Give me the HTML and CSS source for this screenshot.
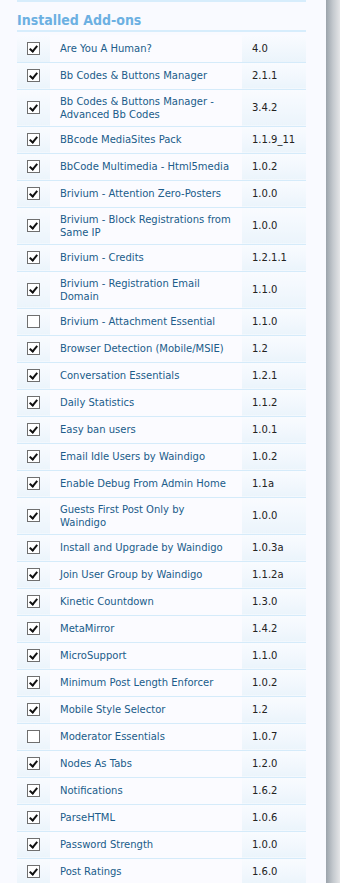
FILE: index.html
```html
<!DOCTYPE html>
<html lang="en">
<head>
  <meta charset="UTF-8">
  <title>Installed Add-ons</title>
  <link rel="stylesheet" href="styles.css">
</head>
<body>
  <div class="page">
    <div class="content">
      <div class="top-rule"></div>
      <h2 class="section-title">Installed Add-ons</h2>
      <table class="addons">
        <tr><td class="check"><span class="box on"></span></td><td class="name">Are You A Human?</td><td class="ver">4.0</td></tr>
        <tr><td class="check"><span class="box on"></span></td><td class="name">Bb Codes &amp; Buttons Manager</td><td class="ver">2.1.1</td></tr>
        <tr><td class="check"><span class="box on"></span></td><td class="name">Bb Codes &amp; Buttons Manager - Advanced Bb Codes</td><td class="ver">3.4.2</td></tr>
        <tr><td class="check"><span class="box on"></span></td><td class="name">BBcode MediaSites Pack</td><td class="ver">1.1.9_11</td></tr>
        <tr><td class="check"><span class="box on"></span></td><td class="name">BbCode Multimedia - Html5media</td><td class="ver">1.0.2</td></tr>
        <tr><td class="check"><span class="box on"></span></td><td class="name">Brivium - Attention Zero-Posters</td><td class="ver">1.0.0</td></tr>
        <tr><td class="check"><span class="box on"></span></td><td class="name">Brivium - Block Registrations from Same IP</td><td class="ver">1.0.0</td></tr>
        <tr><td class="check"><span class="box on"></span></td><td class="name">Brivium - Credits</td><td class="ver">1.2.1.1</td></tr>
        <tr><td class="check"><span class="box on"></span></td><td class="name">Brivium - Registration Email Domain</td><td class="ver">1.1.0</td></tr>
        <tr><td class="check"><span class="box"></span></td><td class="name">Brivium - Attachment Essential</td><td class="ver">1.1.0</td></tr>
        <tr><td class="check"><span class="box on"></span></td><td class="name">Browser Detection (Mobile/MSIE)</td><td class="ver">1.2</td></tr>
        <tr><td class="check"><span class="box on"></span></td><td class="name">Conversation Essentials</td><td class="ver">1.2.1</td></tr>
        <tr><td class="check"><span class="box on"></span></td><td class="name">Daily Statistics</td><td class="ver">1.1.2</td></tr>
        <tr><td class="check"><span class="box on"></span></td><td class="name">Easy ban users</td><td class="ver">1.0.1</td></tr>
        <tr><td class="check"><span class="box on"></span></td><td class="name">Email Idle Users by Waindigo</td><td class="ver">1.0.2</td></tr>
        <tr><td class="check"><span class="box on"></span></td><td class="name">Enable Debug From Admin Home</td><td class="ver">1.1a</td></tr>
        <tr><td class="check"><span class="box on"></span></td><td class="name">Guests First Post Only by Waindigo</td><td class="ver">1.0.0</td></tr>
        <tr><td class="check"><span class="box on"></span></td><td class="name">Install and Upgrade by Waindigo</td><td class="ver">1.0.3a</td></tr>
        <tr><td class="check"><span class="box on"></span></td><td class="name">Join User Group by Waindigo</td><td class="ver">1.1.2a</td></tr>
        <tr><td class="check"><span class="box on"></span></td><td class="name">Kinetic Countdown</td><td class="ver">1.3.0</td></tr>
        <tr><td class="check"><span class="box on"></span></td><td class="name">MetaMirror</td><td class="ver">1.4.2</td></tr>
        <tr><td class="check"><span class="box on"></span></td><td class="name">MicroSupport</td><td class="ver">1.1.0</td></tr>
        <tr><td class="check"><span class="box on"></span></td><td class="name">Minimum Post Length Enforcer</td><td class="ver">1.0.2</td></tr>
        <tr><td class="check"><span class="box on"></span></td><td class="name">Mobile Style Selector</td><td class="ver">1.2</td></tr>
        <tr><td class="check"><span class="box"></span></td><td class="name">Moderator Essentials</td><td class="ver">1.0.7</td></tr>
        <tr><td class="check"><span class="box on"></span></td><td class="name">Nodes As Tabs</td><td class="ver">1.2.0</td></tr>
        <tr><td class="check"><span class="box on"></span></td><td class="name">Notifications</td><td class="ver">1.6.2</td></tr>
        <tr><td class="check"><span class="box on"></span></td><td class="name">ParseHTML</td><td class="ver">1.0.6</td></tr>
        <tr><td class="check"><span class="box on"></span></td><td class="name">Password Strength</td><td class="ver">1.0.0</td></tr>
        <tr><td class="check"><span class="box on"></span></td><td class="name">Post Ratings</td><td class="ver">1.6.0</td></tr>
      </table>
    </div>
    <div class="edge"></div>
  </div>
</body>
</html>
```

FILE: styles.css
```css
body {
  margin: 0;
  padding: 0;
  background-color: #f9faff;
  font-family: "DejaVu Sans", Verdana, sans-serif;
  overflow: hidden;
}

.page {
  display: flex;
  min-height: 883px;
}

.content {
  width: 289px;
  padding-left: 17px;
  padding-right: 20px;
}

.edge {
  flex: 1;
  background: linear-gradient(to right, #9ba3ab, #c4c9ce 50%, #e4e5e7);
}

.top-rule {
  height: 2px;
  background-color: #d7edfc;
}

.section-title {
  margin: 9px 0 3px 0;
  padding-bottom: 1px;
  font-family: "DejaVu Sans Condensed", "DejaVu Sans", sans-serif;
  font-size: 14px;
  line-height: 18px;
  font-weight: bold;
  color: #6cb0e2;
  border-bottom: 2px solid #d7edfc;
}

.addons {
  width: 289px;
  border-collapse: collapse;
  font-size: 10px;
  line-height: 13px;
}

.addons td {
  height: 27px;
  padding: 5px 10px;
  border-bottom: 1px solid #d5ebfa;
  vertical-align: middle;
  box-sizing: border-box;
}

.addons .check {
  width: 33px;
  padding: 0;
  text-align: center;
  background: linear-gradient(to bottom, #f9fbff, #ebf4fb);
}

.addons .name {
  color: #205c8a;
  background-color: #fbfbff;
}

.addons .ver {
  width: 64px;
  color: #222;
  background: linear-gradient(to bottom, #f9fbff, #ebf4fb);
}

.box {
  display: inline-block;
  width: 11px;
  height: 11px;
  border: 1px solid #6f6f6f;
  background-color: #fff;
  vertical-align: middle;
  position: relative;
}

.box.on::after {
  content: "";
  position: absolute;
  left: 3px;
  top: 1px;
  width: 3px;
  height: 6px;
  border-right: 2px solid #111;
  border-bottom: 2px solid #111;
  transform: rotate(40deg);
}
```
